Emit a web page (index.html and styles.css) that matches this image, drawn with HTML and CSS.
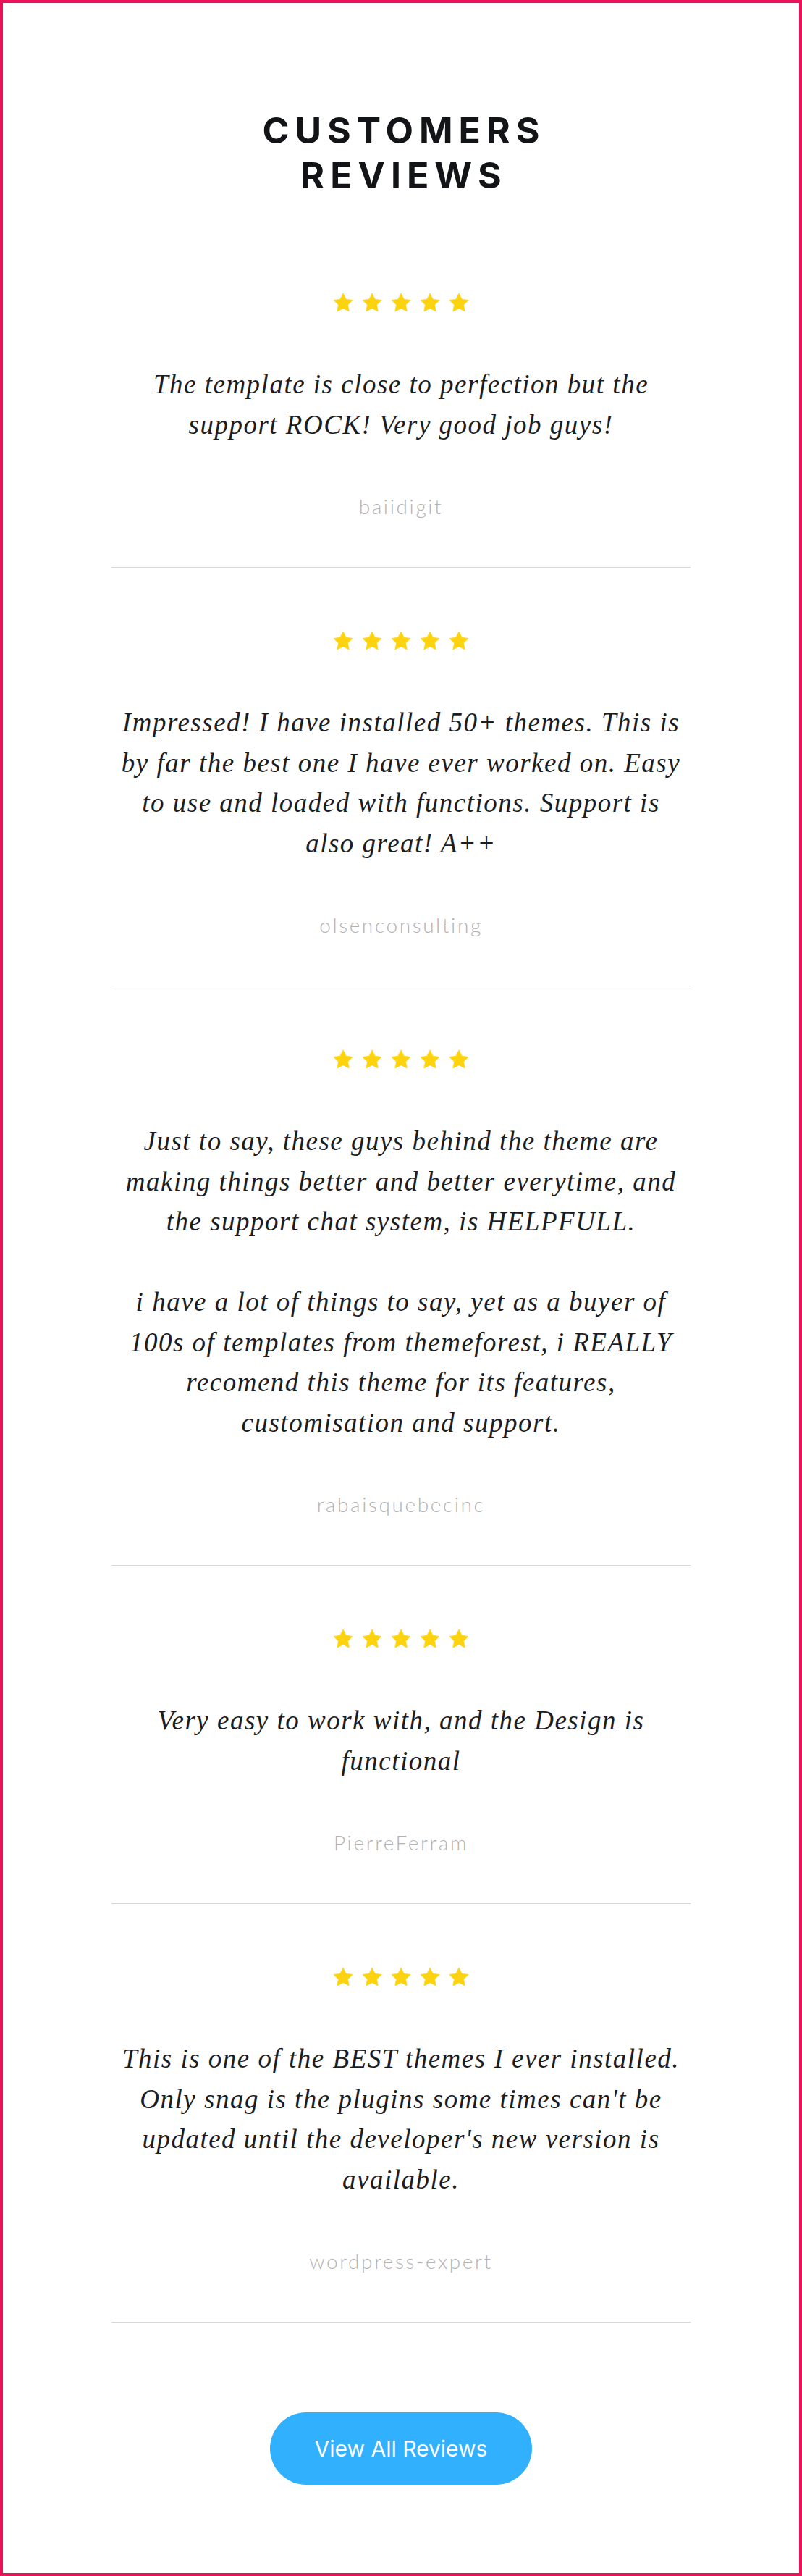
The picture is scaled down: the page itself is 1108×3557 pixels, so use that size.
FILE: index.html
```html
<!DOCTYPE html>
<html lang="en">
<head>
    <meta charset="UTF-8">
    <meta name="viewport" content="width=device-width, initial-scale=1.0">
    <title>Customers Reviews</title>
    <link rel="stylesheet" href="styles.css">
</head>
<body>
    <svg class="icon-defs" width="0" height="0" aria-hidden="true">
        <symbol id="star" viewBox="0 0 24 24">
            <path d="M12 1.6l3.2 6.6 7.2 1-5.2 5.1 1.3 7.2L12 18.1l-6.5 3.4 1.3-7.2-5.2-5.1 7.2-1z"/>
        </symbol>
    </svg>

    <div class="page">
        <h1 class="title">Customers<br>Reviews</h1>

        <div class="reviews">
            <div class="review">
                <div class="stars">
                    <svg><use href="#star"/></svg><svg><use href="#star"/></svg><svg><use href="#star"/></svg><svg><use href="#star"/></svg><svg><use href="#star"/></svg>
                </div>
                <div class="review-text">
                    <p>The template is close to perfection but the support ROCK! Very good job guys!</p>
                </div>
                <div class="author">baiidigit</div>
            </div>

            <div class="review">
                <div class="stars">
                    <svg><use href="#star"/></svg><svg><use href="#star"/></svg><svg><use href="#star"/></svg><svg><use href="#star"/></svg><svg><use href="#star"/></svg>
                </div>
                <div class="review-text">
                    <p>Impressed! I have installed 50+ themes. This is by far the best one I have ever worked on. Easy to use and loaded with functions. Support is also great! A++</p>
                </div>
                <div class="author">olsenconsulting</div>
            </div>

            <div class="review">
                <div class="stars">
                    <svg><use href="#star"/></svg><svg><use href="#star"/></svg><svg><use href="#star"/></svg><svg><use href="#star"/></svg><svg><use href="#star"/></svg>
                </div>
                <div class="review-text">
                    <p>Just to say, these guys behind the theme are making things better and better everytime, and the support chat system, is HELPFULL.</p>
                    <p>i have a lot of things to say, yet as a buyer of 100s of templates from themeforest, i REALLY recomend this theme for its features, customisation and support.</p>
                </div>
                <div class="author">rabaisquebecinc</div>
            </div>

            <div class="review">
                <div class="stars">
                    <svg><use href="#star"/></svg><svg><use href="#star"/></svg><svg><use href="#star"/></svg><svg><use href="#star"/></svg><svg><use href="#star"/></svg>
                </div>
                <div class="review-text">
                    <p>Very easy to work with, and the Design is functional</p>
                </div>
                <div class="author">PierreFerram</div>
            </div>

            <div class="review">
                <div class="stars">
                    <svg><use href="#star"/></svg><svg><use href="#star"/></svg><svg><use href="#star"/></svg><svg><use href="#star"/></svg><svg><use href="#star"/></svg>
                </div>
                <div class="review-text">
                    <p>This is one of the BEST themes I ever installed. Only snag is the plugins some times can't be updated until the developer's new version is available.</p>
                </div>
                <div class="author">wordpress-expert</div>
            </div>
        </div>

        <a class="view-all" href="#">View All Reviews</a>
    </div>
</body>
</html>
```

FILE: styles.css
```css
body {
    margin: 0;
    padding: 0;
    background-color: #ffffff;
    font-family: 'Inter', 'Liberation Sans', sans-serif;
}

.icon-defs {
    position: absolute;
}

.page {
    border: 4px solid #ec1158;
    padding: 145px 0 122px;
    display: flex;
    flex-direction: column;
    align-items: center;
}

.title {
    margin: 0 0 44px;
    font-size: 50px;
    font-weight: 700;
    line-height: 62px;
    letter-spacing: 8px;
    text-transform: uppercase;
    text-align: center;
    color: #121418;
    /* keep the centre true despite the trailing letter-spacing */
    padding-left: 8px;
}

.reviews {
    width: 800px;
}

.review {
    padding: 86px 0 64px;
    border-bottom: 1px solid #d8d8d8;
    text-align: center;
}

.stars {
    display: flex;
    justify-content: center;
    gap: 10px;
    height: 30px;
    margin-bottom: 70px;
}

.stars svg {
    width: 30px;
    height: 30px;
    fill: #fdd30f;
    stroke: #fdd30f;
    stroke-width: 0.6;
    stroke-linejoin: round;
}

.review-text {
    max-width: 785px;
    margin: 0 auto;
}

.review-text p {
    margin: 0;
    font-family: 'Liberation Serif', 'Times New Roman', serif;
    font-style: italic;
    font-size: 37px;
    line-height: 55.5px;
    letter-spacing: 1.5px;
    color: #1b1d22;
}

.review-text p + p {
    margin-top: 55.5px;
}

.author {
    margin-top: 65px;
    font-family: 'Lato', 'Inter', sans-serif;
    font-weight: 300;
    font-size: 28px;
    line-height: 40px;
    letter-spacing: 2.6px;
    color: #b3b3b3;
}

.view-all {
    margin-top: 124px;
    width: 362px;
    height: 100px;
    border-radius: 50px;
    background-color: #30b0fd;
    color: #ffffff;
    font-size: 30px;
    text-decoration: none;
    display: flex;
    align-items: center;
    justify-content: center;
}
```
